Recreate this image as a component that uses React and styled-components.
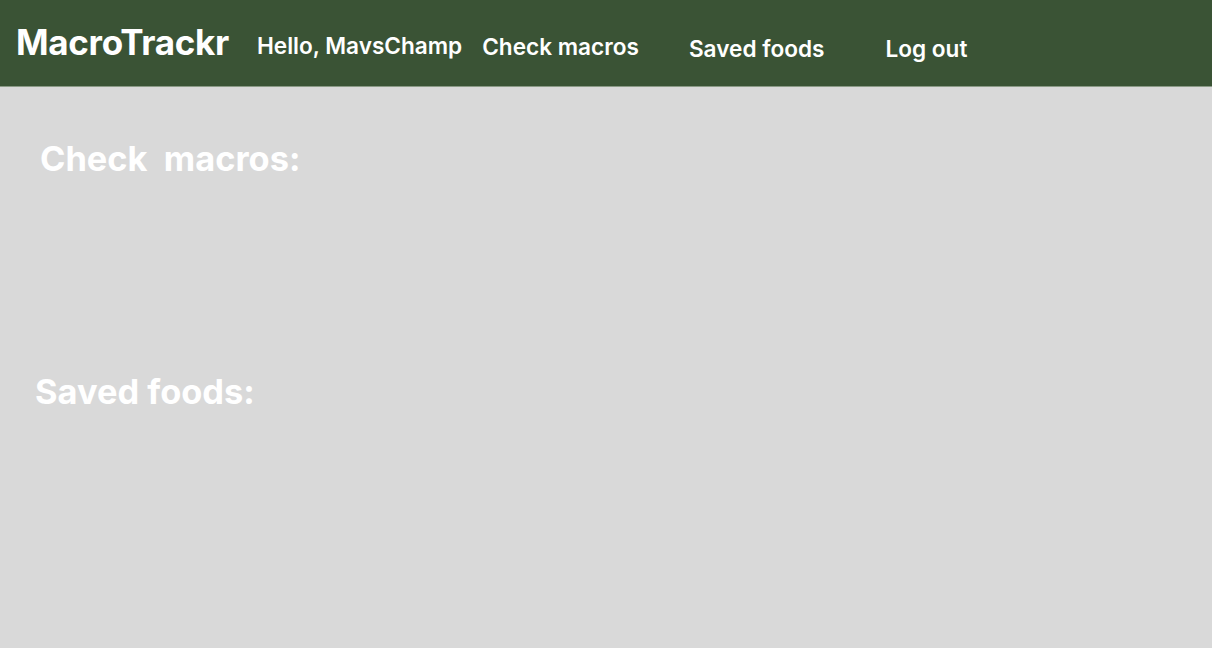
import styled, { createGlobalStyle } from "styled-components";

const GlobalStyle = createGlobalStyle`
  html, body {
    margin: 0;
    padding: 0;
    background: #d9d9d9;
    font-family: Inter, "Noto Sans", sans-serif;
  }
`;

const Page = styled.div`
  min-height: 648px;
  background: #d9d9d9;
`;

const Header = styled.header`
  display: flex;
  align-items: center;
  height: 86px;
  background-color: #3a5335;
  border-bottom: 1px solid #8a9a86;
  padding-left: 16px;
  color: #fff;
`;

const Logo = styled.h1`
  margin: 0;
  font-size: 35px;
  font-weight: 700;
  letter-spacing: -0.3px;
  margin-top: -2px;
`;

const NavItem = styled.span`
  font-size: 22.6px;
  font-weight: 600;
  margin-left: ${(p) => p.$gap}px;
  margin-top: ${(p) => p.$shift || 0}px;
  white-space: nowrap;
`;

const Main = styled.main`
  display: flex;
  flex-direction: column;
`;

const SectionTitle = styled.h2`
  margin: 0;
  color: #fff;
  font-size: 34.4px;
  font-weight: 700;
  white-space: pre;
  padding-left: ${(p) => p.$left}px;
  padding-top: ${(p) => p.$top}px;
  height: ${(p) => p.$height}px;
`;

function App() {
  return (
    <>
      <GlobalStyle />
      <Page>
        <Header>
          <Logo>MacroTrackr</Logo>
          <NavItem $gap={28} $shift={4}>Hello, MavsChamp</NavItem>
          <NavItem $gap={20} $shift={7}>Check macros</NavItem>
          <NavItem $gap={50} $shift={11}>Saved foods</NavItem>
          <NavItem $gap={61} $shift={11}>Log out</NavItem>
        </Header>
        <Main>
          <SectionTitle $left={40} $top={51} $height={233}>
            Check  macros:
          </SectionTitle>
          <SectionTitle $left={35} $top={0} $height={260}>
            Saved foods:
          </SectionTitle>
        </Main>
      </Page>
    </>
  );
}

export default App;
